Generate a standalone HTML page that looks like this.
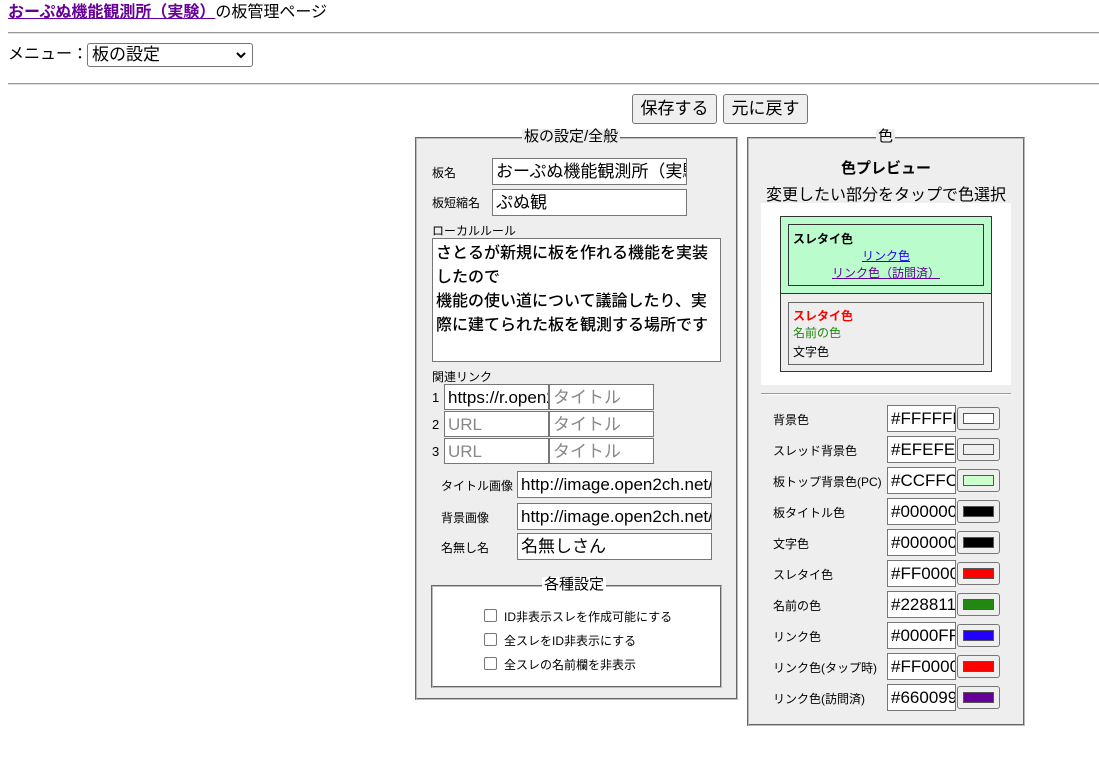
<!DOCTYPE html>
<html><head><meta charset="utf-8"><style>
*{box-sizing:border-box}
body{margin:0;width:1099px;height:778px;background:#fff;font-family:"Liberation Sans","Noto Sans CJK JP",sans-serif;color:#000;position:relative;overflow:hidden}
.a{position:absolute;white-space:nowrap}
.hr{position:absolute;left:8px;right:0;height:2px;border-top:1px solid #999;border-bottom:1px solid #ddd}
.in{position:absolute;background:#fff;border:1px solid #767676;font-size:17px;line-height:25px;padding:0 3px;overflow:hidden;white-space:nowrap}
.ph{color:#888}
.lb{position:absolute;font-size:12px;white-space:nowrap}
.btn{position:absolute;background:#efefef;border:1px solid #767676;border-radius:3px;font-size:17px;text-align:center;line-height:28px}
.fs{position:absolute;background:#eee;border:2px groove #bbb}
.lg{position:absolute;background:#eee;padding:0 2px;font-size:15px;line-height:16px;white-space:nowrap}
.cb{position:absolute;width:13px;height:13px;border:1px solid #767676;border-radius:2px;background:#fff}
.sw{position:absolute;width:43px;height:23px;background:#efefef;border:1px solid #767676;border-radius:3px}
.sw i{position:absolute;left:5px;top:5px;width:31px;height:11px;border:1px solid #555}
</style></head><body>
<div class="a" style="left:8px;top:4px;font-size:16px;line-height:18px"><span style="color:#660099;font-weight:bold;text-decoration:underline">おーぷぬ機能観測所（実験）</span>の板管理ページ</div>
<div class="hr" style="top:32px"></div>
<div class="a" style="left:8px;top:45px;font-size:16px;line-height:20px">メニュー：</div>
<div class="a" style="left:87px;top:43px;width:166px;height:24px;border:1px solid #767676;border-radius:3px;background:#fff;font-size:17px;line-height:22px;padding-left:4px">板の設定</div>
<svg class="a" style="left:236px;top:51px" width="10" height="8"><path d="M1 2 L5 6 L9 2" stroke="#000" stroke-width="2" fill="none"/></svg>
<div class="hr" style="top:83px"></div>
<div class="btn" style="left:632px;top:94px;width:85px;height:30px">保存する</div>
<div class="btn" style="left:723px;top:94px;width:85px;height:30px">元に戻す</div>

<!-- left -->
<div class="fs" style="left:415px;top:137px;width:323px;height:563px"></div>
<div class="lg" style="left:522px;top:129px">板の設定/全般</div>
<div class="lb" style="left:432px;top:164px">板名</div>
<div class="in" style="left:492px;top:158px;width:195px;height:27px">おーぷぬ機能観測所（実験）</div>
<div class="lb" style="left:432px;top:194px">板短縮名</div>
<div class="in" style="left:492px;top:189px;width:195px;height:27px">ぷぬ観</div>
<div class="lb" style="left:432px;top:222px">ローカルルール</div>
<div class="in" style="left:432px;top:238px;width:289px;height:124px;white-space:normal;font-size:16px;line-height:24px;font-weight:500;padding:3px 3px">さとるが新規に板を作れる機能を実装したので<br>機能の使い道について議論したり、実際に建てられた板を観測する場所です</div>
<div class="lb" style="left:432px;top:368px">関連リンク</div>
<div class="lb" style="left:432px;top:390px;font-size:13px">1</div>
<div class="in" style="left:444px;top:384px;width:105px;height:26px">https://r.open2ch</div>
<div class="in ph" style="left:549px;top:384px;width:105px;height:26px">タイトル</div>
<div class="lb" style="left:432px;top:417px;font-size:13px">2</div>
<div class="in ph" style="left:444px;top:411px;width:105px;height:26px">URL</div>
<div class="in ph" style="left:549px;top:411px;width:105px;height:26px">タイトル</div>
<div class="lb" style="left:432px;top:444px;font-size:13px">3</div>
<div class="in ph" style="left:444px;top:438px;width:105px;height:26px">URL</div>
<div class="in ph" style="left:549px;top:438px;width:105px;height:26px">タイトル</div>
<div class="lb" style="left:441px;top:477px">タイトル画像</div>
<div class="in" style="left:517px;top:471px;width:195px;height:27px">http://image.open2ch.net/</div>
<div class="lb" style="left:441px;top:509px">背景画像</div>
<div class="in" style="left:517px;top:503px;width:195px;height:27px">http://image.open2ch.net/</div>
<div class="lb" style="left:441px;top:539px">名無し名</div>
<div class="in" style="left:517px;top:533px;width:195px;height:27px">名無しさん</div>
<div class="fs" style="left:431px;top:585px;width:291px;height:103px;background:#fff"></div>
<div class="lg" style="left:542px;top:577px;background:#fff">各種設定</div>
<div class="cb" style="left:484px;top:609px"></div><div class="lb" style="left:504px;top:608px">ID非表示スレを作成可能にする</div>
<div class="cb" style="left:484px;top:633px"></div><div class="lb" style="left:504px;top:632px">全スレをID非表示にする</div>
<div class="cb" style="left:484px;top:657px"></div><div class="lb" style="left:504px;top:656px">全スレの名前欄を非表示</div>

<!-- right -->
<div class="fs" style="left:747px;top:137px;width:278px;height:589px"></div>
<div class="lg" style="left:876px;top:129px">色</div>
<div class="a" style="left:747px;width:278px;text-align:center;top:157px;font-size:15px;font-weight:bold">色プレビュー</div>
<div class="a" style="left:747px;width:278px;text-align:center;top:181px;font-size:16px">変更したい部分をタップで色選択</div>
<div class="a" style="left:761px;top:203px;width:250px;height:182px;background:#fff"></div>
<div class="a" style="left:780px;top:216px;width:212px;height:78px;background:#bbfccc;border:1px solid #333"></div>
<div class="a" style="left:788px;top:224px;width:196px;height:62px;border:1px solid #333"></div>
<div class="a" style="left:793px;top:230px;font-size:12px;font-weight:bold">スレタイ色</div>
<div class="a" style="left:788px;width:196px;text-align:center;top:247px;font-size:12px;color:#2200ff;text-decoration:underline">リンク色</div>
<div class="a" style="left:788px;width:196px;text-align:center;top:264px;font-size:12px;color:#660099;text-decoration:underline">リンク色（訪問済）</div>
<div class="a" style="left:780px;top:293px;width:212px;height:79px;background:#eee;border:1px solid #333"></div>
<div class="a" style="left:788px;top:302px;width:196px;height:63px;border:1px solid #666"></div>
<div class="a" style="left:793px;top:307px;font-size:12px;font-weight:bold;color:#f00">スレタイ色</div>
<div class="a" style="left:793px;top:324px;font-size:12px;color:#228811">名前の色</div>
<div class="a" style="left:793px;top:343px;font-size:12px">文字色</div>
<div class="a" style="left:761px;top:393px;width:250px;height:2px;border-top:1px solid #999;border-bottom:1px solid #fff"></div>

<div class="lb" style="left:773px;top:411px">背景色</div><div class="in" style="left:887px;top:405px;width:69px;height:27px">#FFFFFF</div><div class="sw" style="left:957px;top:407px"><i style="background:#fff"></i></div>
<div class="lb" style="left:773px;top:442px">スレッド背景色</div><div class="in" style="left:887px;top:436px;width:69px;height:27px">#EFEFEF</div><div class="sw" style="left:957px;top:438px"><i style="background:#efefef"></i></div>
<div class="lb" style="left:773px;top:473px">板トップ背景色(PC)</div><div class="in" style="left:887px;top:467px;width:69px;height:27px">#CCFFCC</div><div class="sw" style="left:957px;top:469px"><i style="background:#ccffcc"></i></div>
<div class="lb" style="left:773px;top:504px">板タイトル色</div><div class="in" style="left:887px;top:498px;width:69px;height:27px">#000000</div><div class="sw" style="left:957px;top:500px"><i style="background:#000"></i></div>
<div class="lb" style="left:773px;top:535px">文字色</div><div class="in" style="left:887px;top:529px;width:69px;height:27px">#000000</div><div class="sw" style="left:957px;top:531px"><i style="background:#000"></i></div>
<div class="lb" style="left:773px;top:566px">スレタイ色</div><div class="in" style="left:887px;top:560px;width:69px;height:27px">#FF0000</div><div class="sw" style="left:957px;top:562px"><i style="background:#f00"></i></div>
<div class="lb" style="left:773px;top:597px">名前の色</div><div class="in" style="left:887px;top:591px;width:69px;height:27px">#228811</div><div class="sw" style="left:957px;top:593px"><i style="background:#228811"></i></div>
<div class="lb" style="left:773px;top:628px">リンク色</div><div class="in" style="left:887px;top:622px;width:69px;height:27px">#0000FF</div><div class="sw" style="left:957px;top:624px"><i style="background:#2200ff"></i></div>
<div class="lb" style="left:773px;top:659px">リンク色(タップ時)</div><div class="in" style="left:887px;top:653px;width:69px;height:27px">#FF0000</div><div class="sw" style="left:957px;top:655px"><i style="background:#f00"></i></div>
<div class="lb" style="left:773px;top:690px">リンク色(訪問済)</div><div class="in" style="left:887px;top:684px;width:69px;height:27px">#660099</div><div class="sw" style="left:957px;top:686px"><i style="background:#660099"></i></div>
</body></html>
